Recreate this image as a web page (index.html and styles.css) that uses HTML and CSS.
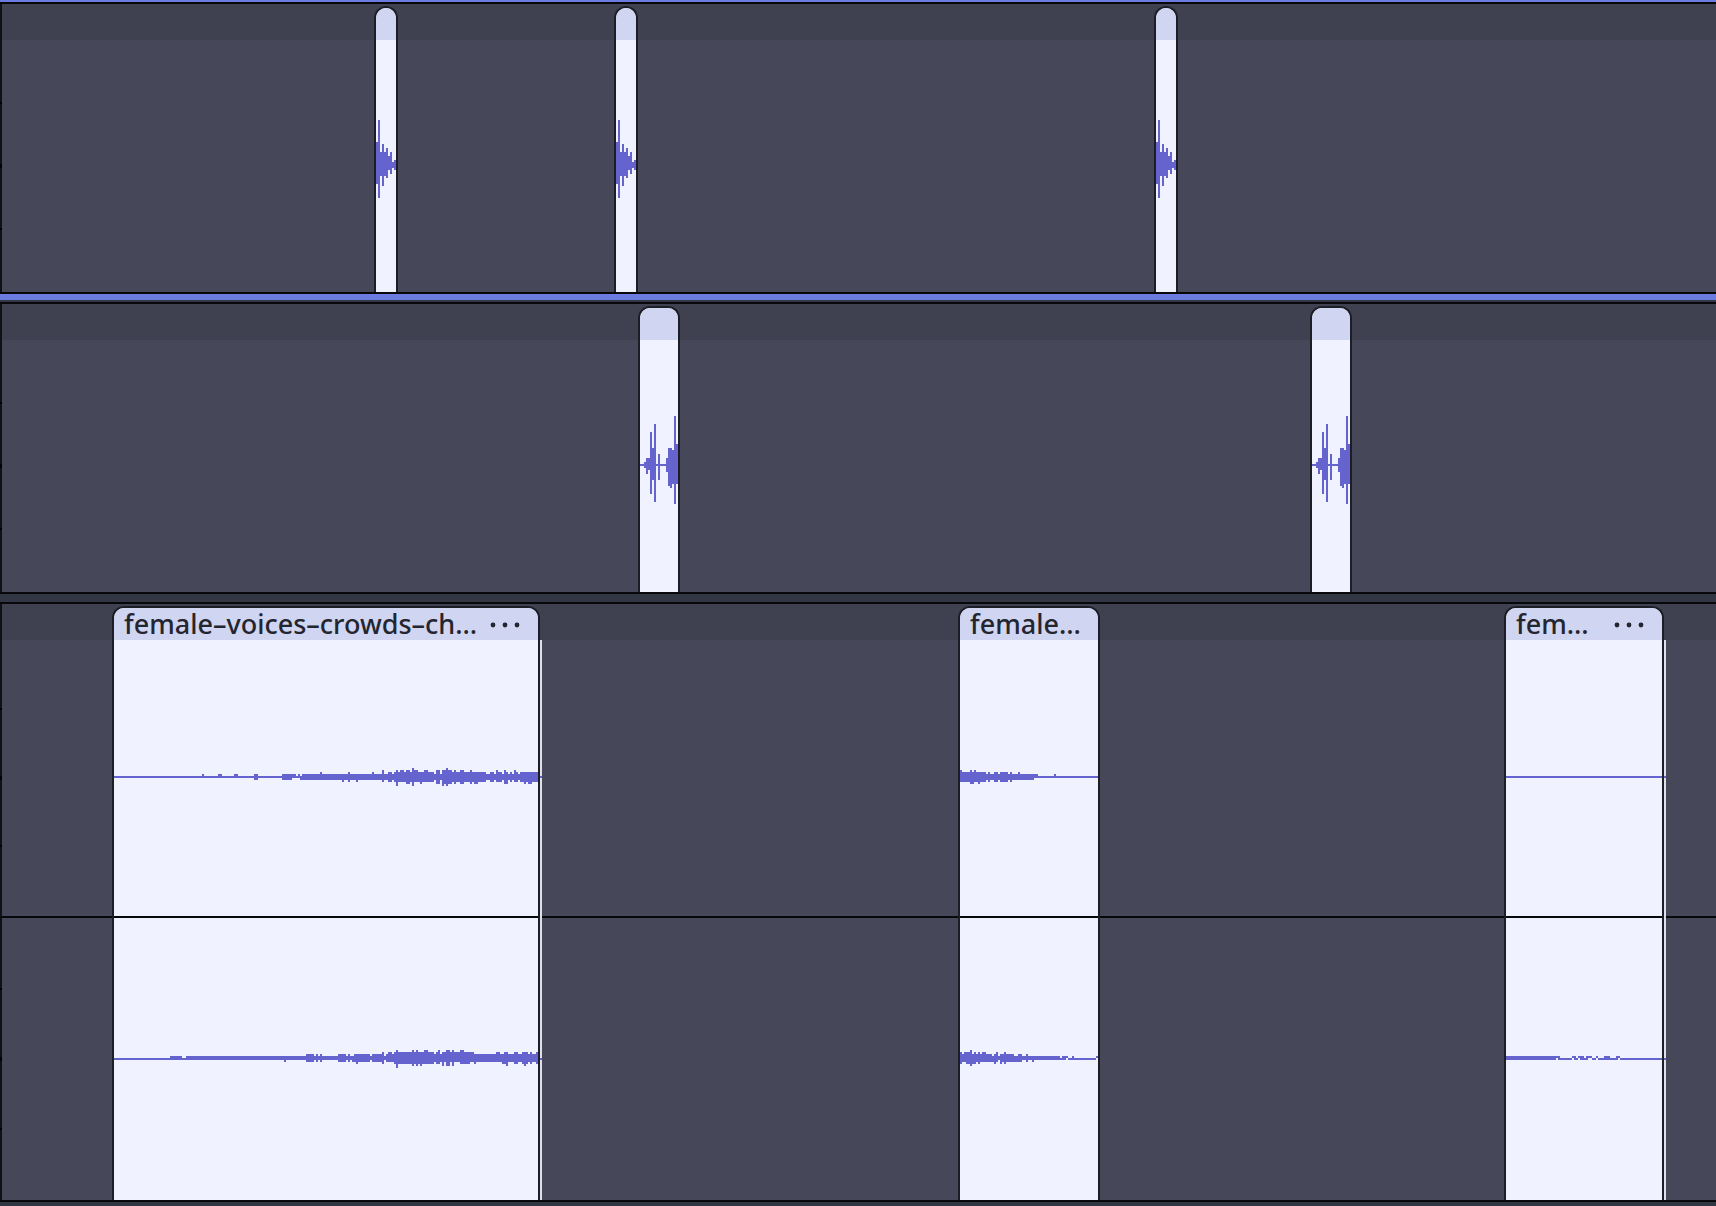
FILE: index.html
```html
<!DOCTYPE html>
<html lang="en">
<head>
<meta charset="utf-8">
<title>Audio timeline</title>
<link rel="stylesheet" href="styles.css">
</head>
<body>
<svg class="defs" aria-hidden="true">
  <symbol id="wave-click" viewBox="33 60 60 276" preserveAspectRatio="none">
    <path d="M33 126h6v126h-6zM39 60h6v234h-6zM45 156h6v72h-6zM51 132h6v126h-6zM57 168h6v42h-6zM57 156h6v72h-6zM63 144h6v90h-6zM69 168h6v42h-6zM75 156h6v66h-6zM81 186h6v18h-6zM87 180h6v30h-6z"/>
  </symbol>
  <symbol id="wave-double" viewBox="30 48 114 300" preserveAspectRatio="none">
    <path d="M30 192h114v6h-114zM42 186h6v18h-6zM48 174h6v48h-6zM54 174h6v36h-6zM60 96h6v186h-6zM66 144h6v96h-6zM72 72h6v234h-6zM84 162h6v78h-6zM108 174h6v42h-6zM114 144h6v114h-6zM120 144h6v120h-6zM126 150h6v102h-6zM132 48h6v264h-6zM138 132h6v120h-6z"/>
  </symbol>
  <symbol id="dots" viewBox="0 0 32 8">
    <circle cx="4" cy="4" r="2.4"/><circle cx="16" cy="4" r="2.4"/><circle cx="28" cy="4" r="2.4"/>
  </symbol>
</svg>
<main class="timeline">
  <section class="track focused" aria-label="Track 1">
    <div class="lane"><i class="tick"></i><i class="tick major"></i><i class="tick"></i></div>
    <article class="clip small" style="left:374px;width:24px"><header class="clip-head"></header><div class="wave"><svg width="20" height="92"><use href="#wave-click"/></svg></div></article>
    <article class="clip small" style="left:614px;width:24px"><header class="clip-head"></header><div class="wave"><svg width="20" height="92"><use href="#wave-click"/></svg></div></article>
    <article class="clip small" style="left:1154px;width:24px"><header class="clip-head"></header><div class="wave"><svg width="20" height="92"><use href="#wave-click"/></svg></div></article>
  </section>
  <section class="track" aria-label="Track 2">
    <div class="lane"><i class="tick"></i><i class="tick major"></i><i class="tick"></i></div>
    <article class="clip" style="left:638px;width:42px"><header class="clip-head"></header><div class="wave"><svg width="38" height="100"><use href="#wave-double"/></svg></div></article>
    <article class="clip" style="left:1310px;width:42px"><header class="clip-head"></header><div class="wave"><svg width="38" height="100"><use href="#wave-double"/></svg></div></article>
  </section>
  <section class="track stereo" aria-label="Track 3">
    <div class="lane left"><i class="tick"></i><i class="tick major"></i><i class="tick"></i></div>
    <div class="lane right"><i class="tick"></i><i class="tick major"></i><i class="tick"></i></div>
    <article class="clip trimmed" style="left:112px;width:428px">
      <header class="clip-head"><h2 class="title">female–voices–crowds–ch…</h2><button class="menu" aria-label="Clip menu"><svg width="32" height="8"><use href="#dots"/></svg></button></header>
      <div class="wave"><svg width="424" height="24" viewBox="42 48 1272 72"><path d="M42 78h1272v6h-1272zM1320 78h6v6h-6zM306 72h6v6h-6zM354 72h12v6h-12zM402 72h12v6h-12zM462 72h12v18h-12zM546 72h24v18h-24zM564 78h12v12h-12zM570 72h18v6h-18zM594 72h6v12h-6zM600 78h6v12h-6zM606 72h708v18h-708zM660 66h6v6h-6zM726 90h6v6h-6zM744 66h6v30h-6zM768 90h6v6h-6zM816 66h6v6h-6zM846 60h6v36h-6zM864 66h12v30h-12zM882 66h120v30h-120zM888 60h6v48h-6zM900 60h12v36h-12zM918 60h12v42h-12zM936 54h6v54h-6zM942 60h12v36h-12zM960 66h6v36h-6zM972 60h12v36h-12zM1008 60h12v42h-12zM1026 60h6v48h-6zM1032 60h6v42h-6zM1038 54h6v54h-6zM1044 60h12v42h-12zM1056 66h102v30h-102zM1062 60h6v42h-6zM1080 60h12v42h-12zM1110 60h6v42h-6zM1122 66h12v36h-12zM1170 66h12v30h-12zM1188 60h6v36h-6zM1194 66h12v30h-12zM1212 60h6v42h-6zM1218 66h6v36h-6zM1230 66h6v30h-6zM1242 60h6v36h-6zM1248 66h6v30h-6zM1260 66h54v30h-54zM1272 96h6v6h-6zM1284 96h12v6h-12z"/></svg></div>
      <div class="wave"><svg width="424" height="24" viewBox="42 36 1272 72"><path d="M42 69h1272v6h-1272zM1320 69h6v6h-6zM210 63h36v6h-36zM258 63h1056v12h-1056zM552 75h6v6h-6zM618 57h24v24h-24zM648 57h6v24h-6zM660 57h6v24h-6zM714 57h24v24h-24zM744 57h6v24h-6zM756 63h12v18h-12zM762 57h48v24h-48zM768 81h6v6h-6zM816 57h36v24h-36zM846 51h6v36h-6zM858 57h456v24h-456zM864 51h12v30h-12zM882 51h6v36h-6zM888 45h6v54h-6zM894 51h108v36h-108zM936 45h6v48h-6zM948 45h6v48h-6zM960 51h6v42h-6zM972 45h12v42h-12zM1008 51h12v36h-12zM1014 45h6v42h-6zM1026 51h96v30h-96zM1026 51h6v42h-6zM1038 45h12v48h-12zM1056 45h6v48h-6zM1080 45h12v42h-12zM1092 51h18v36h-18zM1122 57h6v30h-6zM1188 51h12v30h-12zM1206 57h6v30h-6zM1212 51h12v36h-12zM1218 81h6v12h-6zM1242 51h12v36h-12zM1266 51h18v36h-18zM1272 81h6v12h-6zM1290 51h6v36h-6zM1308 51h6v36h-6z"/></svg></div>
    </article>
    <article class="clip" style="left:958px;width:142px">
      <header class="clip-head"><h2 class="title">female…</h2></header>
      <div class="wave"><svg width="138" height="24" viewBox="60 528 414 72"><path d="M60 558h414v6h-414zM60 552h222v18h-222zM60 540h6v36h-6zM66 546h72v30h-72zM90 540h6v42h-6zM96 570h6v12h-6zM102 540h6v36h-6zM114 570h6v12h-6zM144 546h6v30h-6zM162 546h12v30h-12zM180 546h24v30h-24zM180 570h6v6h-6zM210 546h6v30h-6zM234 546h6v24h-6zM282 552h12v6h-12zM342 552h6v6h-6z"/></svg></div>
      <div class="wave"><svg width="138" height="24" viewBox="60 51 414 72"><path d="M60 78h300v12h-300zM360 84h18v6h-18zM366 78h18v6h-18zM384 84h84v6h-84zM396 78h6v6h-6zM468 78h6v6h-6zM60 66h6v36h-6zM66 72h90v24h-90zM72 66h24v30h-24zM90 60h6v48h-6zM78 96h24v6h-24zM102 66h6v36h-6zM114 66h6v36h-6zM126 66h12v30h-12zM156 78h12v18h-12zM162 72h6v30h-6zM168 66h6v30h-6zM180 72h42v24h-42zM180 96h6v6h-6zM192 66h6v36h-6zM222 78h24v18h-24zM234 72h12v24h-12zM258 72h6v24h-6zM276 90h6v6h-6z"/></svg></div>
    </article>
    <article class="clip trimmed" style="left:1504px;width:160px">
      <header class="clip-head"><h2 class="title">fem…</h2><button class="menu" aria-label="Clip menu"><svg width="32" height="8"><use href="#dots"/></svg></button></header>
      <div class="wave"><svg width="156" height="24" viewBox="48 528 468 72"><path d="M48 558h468v6h-468zM522 558h6v6h-6z"/></svg></div>
      <div class="wave"><svg width="156" height="24" viewBox="48 51 468 72"><path d="M48 78h150v12h-150zM198 78h12v6h-12zM204 84h42v6h-42zM246 78h12v6h-12zM252 84h12v6h-12zM264 78h18v6h-18zM270 84h24v6h-24zM288 78h18v6h-18zM306 84h12v6h-12zM318 78h6v6h-6zM324 84h60v6h-60zM342 78h18v6h-18zM378 78h12v6h-12zM390 84h126v6h-126zM522 84h6v6h-6z"/></svg></div>
    </article>
  </section>
</main>
</body>
</html>
```
FILE: styles.css
```css
* {
  box-sizing: border-box;
}

body {
  margin: 0;
  background: #333645;
  font-family: "Noto Sans", "Open Sans", sans-serif;
  color: #24262f;
}

.defs {
  position: absolute;
  width: 0;
  height: 0;
}

.timeline {
  display: flex;
  flex-direction: column;
  gap: 8px;
  padding-bottom: 4px;
  overflow: hidden;
}

.track {
  position: relative;
  border-top: 2px solid #08080c;
  border-bottom: 2px solid #08080c;
}

/* The focused track is outlined above and below. */
.focused {
  margin-top: 2px;
  box-shadow: 0 -2px #6c7be0, 0 6px #6c7be0;
}

.lane {
  display: flex;
  flex-direction: column;
  justify-content: space-between;
  height: 288px;
  padding: 98px 0 62px;
  border-left: 2px solid #101015;
  background: linear-gradient(#3f4050 36px, #464759 36px);
}

.stereo .left {
  height: 314px;
  padding: 104px 0 69px;
  border-bottom: 2px solid #08080c;
}

.stereo .right {
  height: 282px;
  padding: 70px 0;
  background: #464759;
}

.tick {
  width: 2px;
  height: 2px;
  margin-left: -2px;
  background: #000;
}

.major {
  height: 4px;
}

.clip {
  position: absolute;
  top: 2px;
  bottom: 0;
  display: flex;
  flex-direction: column;
  border: 2px solid #1d1e25;
  border-bottom: 0;
  border-radius: 12px 12px 0 0;
  background: #f0f3ff;
}

.clip-head {
  display: flex;
  align-items: center;
  justify-content: space-between;
  flex: none;
  height: 32px;
  padding: 0 17px 0 10px;
  border-radius: 10px 10px 0 0;
  background: #d0d5f2;
}

.clip-head:empty {
  padding: 0;
}

.title {
  margin: 0;
  font-size: 27px;
  font-weight: 500;
  line-height: 32px;
  white-space: nowrap;
}

.menu {
  display: flex;
  padding: 2px 0 0;
  border: 0;
  background: none;
  fill: #24262f;
}

.wave {
  display: flex;
  align-items: center;
  flex: 1;
  fill: #6564ce;
}

.wave svg {
  flex: none;
  overflow: visible;
  shape-rendering: crispEdges;
}

.stereo .wave {
  flex: none;
  height: 282px;
}

.stereo .clip-head + .wave {
  height: 278px;
  border-bottom: 2px solid #08080c;
}

/* Sliver of audio hidden past the trimmed edge. */
.trimmed::after {
  content: "";
  position: absolute;
  z-index: -1;
  top: 32px;
  right: -4px;
  bottom: 0;
  width: 2px;
  background: #dfe0ea;
}

.trimmed {
  z-index: 0;
}
```
